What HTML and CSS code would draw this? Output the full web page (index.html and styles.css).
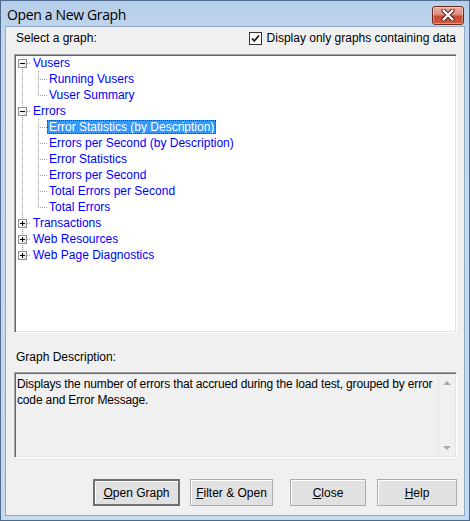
FILE: index.html
```html
<!DOCTYPE html>
<html>
<head>
<meta charset="utf-8">
<link rel="stylesheet" href="styles.css">
</head>
<body>
<div class="window">
  <div class="titlebar">
    <span class="title">Open a New Graph</span>
    <span class="close-btn">
      <svg width="14" height="12" viewBox="0 0 14 12"><path d="M2.5 1.5 L11.5 10.5 M11.5 1.5 L2.5 10.5" stroke="#5a1a12" stroke-width="4.2" stroke-linecap="round"/><path d="M2.5 1.5 L11.5 10.5 M11.5 1.5 L2.5 10.5" stroke="#fff" stroke-width="2.4" stroke-linecap="round"/></svg>
    </span>
  </div>
  <div class="content">
    <div class="top-row">
      <span class="label">Select a graph:</span>
      <label class="check">
        <span class="checkbox"><svg width="9" height="9" viewBox="0 0 9 9"><path d="M1 4.5 L3.3 7 L8 1.5" fill="none" stroke="#111" stroke-width="1.8"/></svg></span>
        <span>Display only graphs containing data</span>
      </label>
    </div>
    <div class="tree">
      <div class="row"><span class="cell box-cell first"><span class="box minus"></span></span><span class="text">Vusers</span></div>
      <div class="row"><span class="cell v"></span><span class="cell t"></span><span class="text">Running Vusers</span></div>
      <div class="row"><span class="cell v"></span><span class="cell l"></span><span class="text">Vuser Summary</span></div>
      <div class="row"><span class="cell box-cell mid"><span class="box minus"></span></span><span class="text">Errors</span></div>
      <div class="row"><span class="cell v"></span><span class="cell t"></span><span class="text selected">Error Statistics (by Description)</span></div>
      <div class="row"><span class="cell v"></span><span class="cell t"></span><span class="text">Errors per Second (by Description)</span></div>
      <div class="row"><span class="cell v"></span><span class="cell t"></span><span class="text">Error Statistics</span></div>
      <div class="row"><span class="cell v"></span><span class="cell t"></span><span class="text">Errors per Second</span></div>
      <div class="row"><span class="cell v"></span><span class="cell t"></span><span class="text">Total Errors per Second</span></div>
      <div class="row"><span class="cell v"></span><span class="cell l"></span><span class="text">Total Errors</span></div>
      <div class="row"><span class="cell box-cell mid"><span class="box plus"></span></span><span class="text">Transactions</span></div>
      <div class="row"><span class="cell box-cell mid"><span class="box plus"></span></span><span class="text">Web Resources</span></div>
      <div class="row"><span class="cell box-cell last"><span class="box plus"></span></span><span class="text">Web Page Diagnostics</span></div>
    </div>
    <div class="desc-label">Graph Description:</div>
    <div class="desc">
      <div class="desc-text">Displays the number of errors that accrued during the load test, grouped by error code and Error Message.</div>
      <div class="scrollbar">
        <span class="arrow up"></span>
        <span class="arrow down"></span>
      </div>
    </div>
    <div class="buttons">
      <span class="btn default b1"><u>O</u>pen Graph</span>
      <span class="btn b2"><u>F</u>ilter &amp; Open</span>
      <span class="btn b3"><u>C</u>lose</span>
      <span class="btn b4"><u>H</u>elp</span>
    </div>
  </div>
</div>
</body>
</html>
```
FILE: styles.css
```css
* { box-sizing: border-box; }
html, body { margin: 0; padding: 0; background: #fff; }
body { font-family: "Liberation Sans", Arial, sans-serif; font-size: 12px; color: #000; }

.window {
  width: 470px;
  height: 521px;
  border: 1px solid #4d6b8c;
  background: linear-gradient(to bottom, #b6cee9 0, #c3d8ef 40px, #c6daf0 100%);
  padding: 0 4px 4px 4px;
  display: flex;
  flex-direction: column;
}

.titlebar {
  height: 26px;
  display: flex;
  align-items: center;
  justify-content: space-between;
  padding-left: 2px;
}
.title {
  font-family: "Open Sans", "Noto Sans", sans-serif;
  font-size: 14px;
  color: #000;
  letter-spacing: -0.35px;
  margin-top: 1px;
}
.close-btn {
  width: 32px;
  height: 19px;
  margin-top: 3px;
  margin-right: 1px;
  border: 1px solid #6e2a20;
  border-radius: 3px;
  background: linear-gradient(to bottom, #eab0a2 0, #dc8a76 45%, #c74a32 55%, #cf5a40 100%);
  display: flex;
  align-items: center;
  justify-content: center;
  box-shadow: inset 0 0 0 1px rgba(255,255,255,0.35);
}

.content {
  flex: 1;
  background: #f0f0f0;
  border: 1px solid #8fa8c6;
  padding: 1px 7px 9px 8px;
  display: flex;
  flex-direction: column;
}

.top-row {
  height: 20px;
  display: flex;
  align-items: center;
  justify-content: space-between;
}
.label { margin-left: 2px; }
.check {
  display: flex;
  align-items: center;
  gap: 5px;
  margin-right: 1px;
}
.checkbox {
  width: 13px;
  height: 13px;
  border: 1px solid #333;
  background: #fff;
  display: flex;
  align-items: center;
  justify-content: center;
}

.tree {
  margin-top: 6px;
  height: 279px;
  background: #fff;
  border: 1px solid;
  border-color: #a0a0a0 #fff #fff #a0a0a0;
  box-shadow: inset 1px 1px 0 #696969, inset -1px -1px 0 #e3e3e3;
  padding: 0;
  color: #0000ff;
}
.row {
  height: 16px;
  display: flex;
  align-items: center;
}
.cell {
  width: 16px;
  height: 16px;
  flex: none;
  display: flex;
  align-items: center;
  background-repeat: no-repeat;
}
.text {
  padding: 0 2px;
  line-height: 14px;
  height: 14px;
  white-space: nowrap;
}
.text.selected {
  background: #3399ff;
  color: #fff;
  outline: 1px dotted #5a3a1a;
  outline-offset: -1px;
}

/* dotted lines */
.v {
  background-image: repeating-linear-gradient(to bottom, #a0a0a0 0 1px, transparent 1px 2px);
  background-size: 1px 16px;
  background-position: 7px 0;
}
.t {
  background-image:
    repeating-linear-gradient(to bottom, #a0a0a0 0 1px, transparent 1px 2px),
    repeating-linear-gradient(to right, #a0a0a0 0 1px, transparent 1px 2px);
  background-size: 1px 16px, 7px 1px;
  background-position: 7px 0, 9px 8px;
}
.l {
  background-image:
    repeating-linear-gradient(to bottom, #a0a0a0 0 1px, transparent 1px 2px),
    repeating-linear-gradient(to right, #a0a0a0 0 1px, transparent 1px 2px);
  background-size: 1px 9px, 7px 1px;
  background-position: 7px 0, 9px 8px;
}
.box-cell {
  background-image:
    repeating-linear-gradient(to bottom, #a0a0a0 0 1px, transparent 1px 2px),
    repeating-linear-gradient(to right, #a0a0a0 0 1px, transparent 1px 2px);
  background-size: 1px 16px, 4px 1px;
  background-position: 7px 0, 12px 8px;
}
.box-cell.first { background-size: 1px 8px, 4px 1px; background-position: 7px 8px, 12px 8px; }
.box-cell.last { background-size: 1px 8px, 4px 1px; background-position: 7px 0, 12px 8px; }

.box {
  width: 9px;
  height: 9px;
  margin-left: 3px;
  border: 1px solid #919191;
  background: linear-gradient(to bottom right, #fff 0, #f2f2f2 60%, #d8d8d8 100%);
  position: relative;
}
.box::before {
  content: "";
  position: absolute;
  left: 1px;
  top: 3px;
  width: 5px;
  height: 1px;
  background: #000;
}
.box.plus::after {
  content: "";
  position: absolute;
  left: 3px;
  top: 1px;
  width: 1px;
  height: 5px;
  background: #000;
}

.desc-label {
  margin-top: 16px;
  margin-left: 2px;
  line-height: 16px;
}
.desc {
  margin-top: 7px;
  height: 86px;
  border: 1px solid;
  border-color: #a0a0a0 #fff #fff #a0a0a0;
  box-shadow: inset 1px 1px 0 #696969, inset -1px -1px 0 #e3e3e3;
  background: #f0f0f0;
  display: flex;
}
.desc-text {
  flex: 1;
  padding: 3px 2px 0 2px;
  line-height: 16px;
  letter-spacing: -0.15px;
}
.scrollbar {
  width: 17px;
  margin: 1px 1px 1px 0;
  border-left: 1px solid #e6e6e6;
  display: flex;
  flex-direction: column;
  justify-content: space-between;
  align-items: center;
  padding: 7px 0 6px;
}
.arrow {
  width: 0;
  height: 0;
  border-left: 4px solid transparent;
  border-right: 4px solid transparent;
}
.arrow.up { border-bottom: 4px solid #a9a9a9; }
.arrow.down { border-top: 4px solid #a9a9a9; }

.buttons {
  margin-top: 21px;
  display: flex;
  justify-content: flex-end;
}
.btn {
  height: 27px;
  display: flex;
  align-items: center;
  justify-content: center;
  border: 1px solid #acacac;
  background: #e1e1e1;
  box-shadow: inset 1px 1px 0 #fff;
}
.btn u { text-decoration: underline; text-underline-offset: 1px; }
.btn.default { border: 2px solid #6f6f6f; }
.b1 { width: 87px; }
.b2 { width: 83px; margin-left: 10px; }
.b3 { width: 76px; margin-left: 17px; }
.b4 { width: 80px; margin-left: 11px; }
```
